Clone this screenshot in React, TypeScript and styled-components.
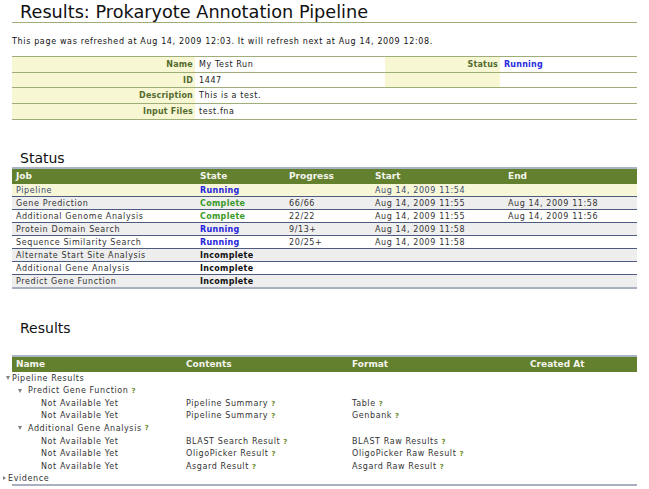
import React from "react";
import styled, { createGlobalStyle } from "styled-components";

const Global = createGlobalStyle`
  html, body { margin: 0; padding: 0; background: #fff; }
  body { font-family: "DejaVu Sans", Verdana, sans-serif; color: #333; }
  th, td { box-sizing: border-box; }
`;

const Page = styled.div`
  width: 625px;
  padding: 0 12px;
`;

const Title = styled.h1`
  margin: 0;
  padding: 0 0 0 8px;
  height: 22px;
  line-height: 24px;
  font-size: 17.7px;
  font-weight: normal;
  color: #111;
  border-bottom: 1px solid #9fae78;
  overflow: hidden;
`;

const Refresh = styled.p`
  margin: 12px 0 0;
  height: 13px;
  line-height: 13px;
  font-size: 8px;
  letter-spacing: 0.65px;
  color: #111;
`;

const InfoTable = styled.table`
  margin-top: 8px;
  width: 625px;
  border-collapse: collapse;
  table-layout: fixed;
  border-top: 1px solid #9fae78;
`;

const InfoRow = styled.tr`
  border-bottom: 1px solid #9fae78;
`;

const InfoLabel = styled.th<{ $empty?: boolean }>`
  height: 15.7px;
  background: ${(p) => (p.$empty ? "#fff" : "#f7f7d4")};
  color: #556b2f;
  font-size: 8px;
  letter-spacing: 0.2px;
  font-weight: bold;
  text-align: right;
  padding: 0 2px 0 0;
`;

const InfoValue = styled.td<{ $status?: boolean }>`
  height: 15.7px;
  font-size: 8px;
  letter-spacing: ${(p) => (p.$status ? "0.2px" : "0.6px")};
  color: ${(p) => (p.$status ? "#2a2ae0" : "#222")};
  font-weight: ${(p) => (p.$status ? "bold" : "normal")};
  padding: 0 0 0 4px;
`;

const SectionHeading = styled.h2<{ $top: number; $gap: number }>`
  margin: ${(p) => p.$top}px 0 ${(p) => p.$gap}px;
  padding-left: 8px;
  height: 16px;
  line-height: 16px;
  font-size: 14px;
  font-weight: normal;
  color: #111;
`;

const GridTable = styled.table`
  width: 625px;
  border-collapse: collapse;
  table-layout: fixed;
`;

const HeadRow = styled.tr`
  background: #62802d;
  border-top: 2px solid #a9b4c4;
`;

const HeadCell = styled.th<{ $w: number }>`
  width: ${(p) => p.$w}px;
  height: 16px;
  color: #f4f4ee;
  font-size: 9px;
  font-weight: bold;
  text-align: left;
  padding: 0 0 0 4px;
`;

const JobRow = styled.tr<{ $tone: "hi" | "odd" | "even"; $last?: boolean }>`
  background: ${(p) => (p.$tone === "hi" ? "#f7f7d8" : p.$tone === "odd" ? "#eeeeee" : "#fff")};
  border-bottom: ${(p) => (p.$last ? "2px solid #a7afc0" : "1px solid #4d5b80")};
  color: ${(p) => (p.$tone === "hi" ? "#3a4a70" : "#333")};
`;

const Cell = styled.td`
  height: 13px;
  font-size: 8px;
  letter-spacing: 0.6px;
  padding: 0 0 0 4px;
  white-space: nowrap;
  overflow: hidden;
`;

const stateColor: Record<string, string> = {
  Running: "#2525dc",
  Complete: "#3a9a2a",
  Incomplete: "#111",
};

const StateCell = styled(Cell)<{ $state: string }>`
  font-weight: bold;
  letter-spacing: 0.3px;
  color: ${(p) => stateColor[p.$state]};
`;

const TreeTable = styled(GridTable)`
  border-bottom: 2px solid #a7afc0;
`;

const TreeRow = styled.tr``;

const TreeCell = styled(Cell)`
  height: 12.6px;
`;

const TreeName = styled(TreeCell)<{ $x: number }>`
  padding-left: ${(p) => p.$x}px;
  overflow: visible;
`;

const NameWrap = styled.div`
  display: flex;
  align-items: center;
  margin-left: -12px;
`;

const Arrow = styled.span<{ $open: boolean; $gap: number }>`
  flex: none;
  width: 0;
  height: 0;
  margin-right: ${(p) => p.$gap}px;
  border-style: solid;
  border-color: transparent;
  ${(p) =>
    p.$open
      ? "border-width: 4px 2px 0 2px; border-top-color: #808080;"
      : "border-width: 2.5px 0 2.5px 3.5px; border-left-color: #808080;"}
`;

const Help = styled.span`
  margin-left: 3px;
  font-size: 7px;
  letter-spacing: 0;
  font-weight: bold;
  color: #6b8a2a;
`;

const jobs: [string, string, string, string, string][] = [
  ["Pipeline", "Running", "", "Aug 14, 2009 11:54", ""],
  ["Gene Prediction", "Complete", "66/66", "Aug 14, 2009 11:55", "Aug 14, 2009 11:58"],
  ["Additional Genome Analysis", "Complete", "22/22", "Aug 14, 2009 11:55", "Aug 14, 2009 11:56"],
  ["Protein Domain Search", "Running", "9/13+", "Aug 14, 2009 11:58", ""],
  ["Sequence Similarity Search", "Running", "20/25+", "Aug 14, 2009 11:58", ""],
  ["Alternate Start Site Analysis", "Incomplete", "", "", ""],
  ["Additional Gene Analysis", "Incomplete", "", "", ""],
  ["Predict Gene Function", "Incomplete", "", "", ""],
];

type TreeItem = {
  x: number;
  gap?: number;
  name: string;
  arrow?: "open" | "closed";
  help?: boolean;
  contents?: string;
  format?: string;
};

const tree: TreeItem[] = [
  { x: 6, gap: 2, name: "Pipeline Results", arrow: "open" },
  { x: 18, gap: 6, name: "Predict Gene Function", arrow: "open", help: true },
  { x: 41, name: "Not Available Yet", contents: "Pipeline Summary", format: "Table" },
  { x: 41, name: "Not Available Yet", contents: "Pipeline Summary", format: "Genbank" },
  { x: 18, gap: 6, name: "Additional Gene Analysis", arrow: "open", help: true },
  { x: 41, name: "Not Available Yet", contents: "BLAST Search Result", format: "BLAST Raw Results" },
  { x: 41, name: "Not Available Yet", contents: "OligoPicker Result", format: "OligoPicker Raw Result" },
  { x: 41, name: "Not Available Yet", contents: "Asgard Result", format: "Asgard Raw Result" },
  { x: 3, gap: 2, name: "Evidence", arrow: "closed" },
];

export default function App() {
  return (
    <Page>
      <Global />
      <Title>Results: Prokaryote Annotation Pipeline</Title>
      <Refresh>
        This page was refreshed at Aug 14, 2009 12:03. It will refresh next at Aug 14, 2009 12:08.
      </Refresh>
      <InfoTable>
        <colgroup>
          <col style={{ width: 183 }} />
          <col style={{ width: 190 }} />
          <col style={{ width: 115 }} />
          <col style={{ width: 137 }} />
        </colgroup>
        <tbody>
          <InfoRow>
            <InfoLabel>Name</InfoLabel>
            <InfoValue>My Test Run</InfoValue>
            <InfoLabel>Status</InfoLabel>
            <InfoValue $status>Running</InfoValue>
          </InfoRow>
          <InfoRow>
            <InfoLabel>ID</InfoLabel>
            <InfoValue>1447</InfoValue>
            <InfoLabel />
            <InfoValue />
          </InfoRow>
          <InfoRow>
            <InfoLabel>Description</InfoLabel>
            <InfoValue>This is a test.</InfoValue>
            <InfoLabel $empty />
            <InfoValue />
          </InfoRow>
          <InfoRow>
            <InfoLabel>Input Files</InfoLabel>
            <InfoValue>test.fna</InfoValue>
            <InfoLabel $empty />
            <InfoValue />
          </InfoRow>
        </tbody>
      </InfoTable>

      <SectionHeading $top={30} $gap={1}>Status</SectionHeading>
      <GridTable>
        <thead>
          <HeadRow>
            <HeadCell $w={184}>Job</HeadCell>
            <HeadCell $w={89}>State</HeadCell>
            <HeadCell $w={86}>Progress</HeadCell>
            <HeadCell $w={133}>Start</HeadCell>
            <HeadCell $w={133}>End</HeadCell>
          </HeadRow>
        </thead>
        <tbody>
          {jobs.map((j, i) => (
            <JobRow
              key={j[0]}
              $tone={i === 0 ? "hi" : i % 2 === 1 ? "odd" : "even"}
              $last={i === jobs.length - 1}
            >
              <Cell>{j[0]}</Cell>
              <StateCell $state={j[1]}>{j[1]}</StateCell>
              <Cell>{j[2]}</Cell>
              <Cell>{j[3]}</Cell>
              <Cell>{j[4]}</Cell>
            </JobRow>
          ))}
        </tbody>
      </GridTable>

      <SectionHeading $top={31} $gap={19}>Results</SectionHeading>
      <TreeTable>
        <thead>
          <HeadRow>
            <HeadCell $w={170}>Name</HeadCell>
            <HeadCell $w={166}>Contents</HeadCell>
            <HeadCell $w={178}>Format</HeadCell>
            <HeadCell $w={111}>Created At</HeadCell>
          </HeadRow>
        </thead>
        <tbody>
          {tree.map((t, i) => (
            <TreeRow key={i}>
              <TreeName $x={t.x}>
                <NameWrap>
                  {t.arrow && <Arrow $open={t.arrow === "open"} $gap={t.gap ?? 0} />}
                  <span>{t.name}</span>
                  {t.help && <Help>?</Help>}
                </NameWrap>
              </TreeName>
              <TreeCell>
                {t.contents}
                {t.contents && <Help>?</Help>}
              </TreeCell>
              <TreeCell>
                {t.format}
                {t.format && <Help>?</Help>}
              </TreeCell>
              <TreeCell />
            </TreeRow>
          ))}
        </tbody>
      </TreeTable>
    </Page>
  );
}
